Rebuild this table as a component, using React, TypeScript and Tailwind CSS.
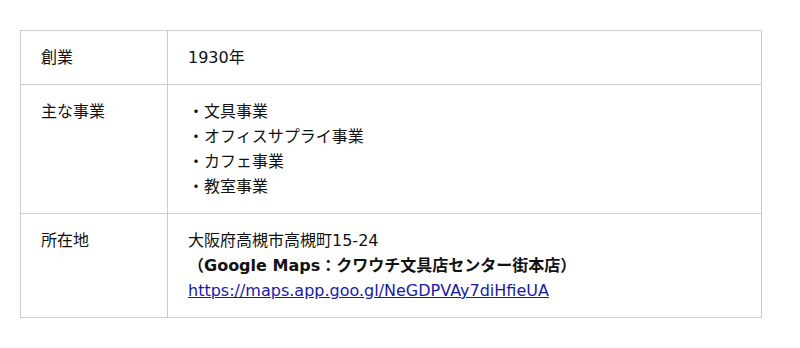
const font = {
  fontFamily: '"DejaVu Sans", "Noto Sans CJK JP", sans-serif',
};

interface Row {
  label: string;
  body: React.ReactNode;
}

const rows: Row[] = [
  { label: '創業', body: <p>1930年</p> },
  {
    label: '主な事業',
    body: (
      <ul>
        <li>・文具事業</li>
        <li>・オフィスサプライ事業</li>
        <li>・カフェ事業</li>
        <li>・教室事業</li>
      </ul>
    ),
  },
  {
    label: '所在地',
    body: (
      <div>
        <p>大阪府高槻市高槻町15-24</p>
        <p className="font-bold">（Google Maps：クワウチ文具店センター街本店）</p>
        <a href="#" className="text-[#1a1aa6] underline">
          https://maps.app.goo.gl/NeGDPVAy7diHfieUA
        </a>
      </div>
    ),
  },
];

export default function App() {
  return (
    <div className="bg-white w-[800px] h-[348px] pt-[30px] px-5" style={font}>
      <table className="w-[742px] border-collapse text-[16px] leading-[25px] text-[#111]">
        <tbody>
          {rows.map(r => (
            <tr key={r.label}>
              <th className="w-[147px] border border-[#cbcbcb] px-5 py-[14px] text-left font-normal align-top">
                {r.label}
              </th>
              <td className="border border-[#cbcbcb] px-5 py-[14px] align-top">{r.body}</td>
            </tr>
          ))}
        </tbody>
      </table>
    </div>
  );
}
